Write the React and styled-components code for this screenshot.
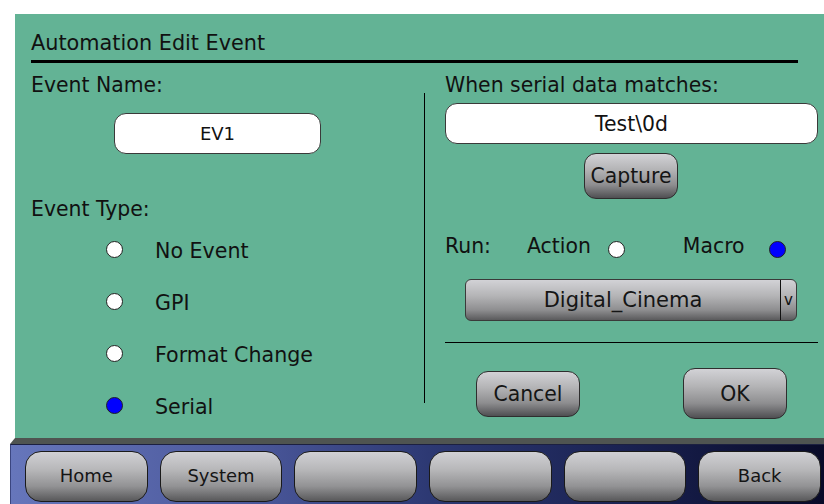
import styled, { createGlobalStyle } from "styled-components";

const GlobalStyle = createGlobalStyle`
  html, body {
    margin: 0;
    padding: 0;
    background: #ffffff;
    font-family: "DejaVu Sans", "Liberation Sans", sans-serif;
    color: #111;
  }
`;

const Page = styled.div`
  width: 824px;
  height: 504px;
  display: flex;
  flex-direction: column;
  overflow: hidden;
`;

const Panel = styled.div`
  margin: 14px 0 0 15px;
  height: 424px;
  box-sizing: border-box;
  padding: 17px 6px 0 16px;
  background: #63b395;
  display: flex;
  flex-direction: column;
`;

const Title = styled.div`
  font-size: 20.8px;
  line-height: 24px;
`;

const TitleRule = styled.div`
  margin-top: 5px;
  width: 767px;
  height: 3px;
  background: #000;
`;

const Columns = styled.div`
  display: grid;
  grid-template-columns: 393px 1px 1fr;
`;

const Column = styled.div`
  display: flex;
  flex-direction: column;
  padding-top: 10px;
  padding-left: ${(p) => p.$inset || 0}px;
`;

const Divider = styled.div`
  margin-top: 30px;
  height: 310px;
  background: #000;
`;

const Label = styled.div`
  font-size: 20.4px;
  line-height: 24px;
  margin-top: ${(p) => p.$top || 0}px;
  white-space: nowrap;
`;

const Field = styled.div`
  box-sizing: border-box;
  height: 41px;
  width: ${(p) => (p.$width ? `${p.$width}px` : "auto")};
  margin: ${(p) => p.$margin};
  background: #fff;
  border: 1px solid #3a3a3a;
  border-radius: 12px;
  display: flex;
  align-items: center;
  justify-content: center;
  font-size: ${(p) => p.$size}px;
`;

const RadioList = styled.div`
  margin-top: 18px;
  padding-left: 75px;
  display: flex;
  flex-direction: column;
  gap: 28px;
`;

const RadioRow = styled.div`
  display: flex;
  align-items: center;
  height: 24px;
  gap: 32px;
  font-size: 20.6px;
`;

const Dot = styled.span`
  box-sizing: border-box;
  width: 17px;
  height: 17px;
  border-radius: 50%;
  border: 1px solid #222;
  background: ${(p) => (p.$on ? "#0000ff" : "#ffffff")};
  margin-bottom: ${(p) => p.$lift || 0}px;
  margin-top: ${(p) => p.$drop || 0}px;
  margin-left: ${(p) => p.$left || 0}px;
  flex-shrink: 0;
`;

const GreyButton = styled.div`
  box-sizing: border-box;
  width: ${(p) => p.$w}px;
  height: ${(p) => p.$h}px;
  margin-left: ${(p) => p.$left || 0}px;
  border: 1px solid #2e2e2e;
  border-radius: 12px;
  background: linear-gradient(#d2d2d6 0%, #b4b4b6 35%, #8e8e90 70%, #4f4f52 100%);
  display: flex;
  align-items: center;
  justify-content: center;
  font-size: 20.4px;
  color: #151515;
`;

const CaptureButton = styled(GreyButton)`
  margin-top: 9px;
  align-self: center;
  margin-left: -1px;
`;

const RunRow = styled.div`
  margin-top: 35px;
  height: 24px;
  display: flex;
  align-items: center;
  font-size: 20.4px;
`;

const RunText = styled.span`
  margin-left: ${(p) => p.$left || 0}px;
  line-height: 24px;
`;

const Select = styled.div`
  box-sizing: border-box;
  margin: 21px 0 0 20px;
  width: 332px;
  height: 42px;
  border: 1px solid #3a3a3a;
  border-radius: 6px;
  background: linear-gradient(#d2d2d6 0%, #b4b4b6 40%, #8e8e90 75%, #5a5a5c 100%);
  display: flex;
`;

const SelectValue = styled.div`
  flex: 1;
  display: flex;
  align-items: center;
  justify-content: center;
  font-size: 21px;
  color: #151515;
`;

const SelectArrow = styled.div`
  width: 15px;
  border-left: 1px solid #111;
  display: flex;
  align-items: center;
  justify-content: center;
  font-size: 15px;
  color: #111;
`;

const HRule = styled.div`
  margin-top: 21px;
  height: 1px;
  background: #000;
`;

const ButtonRow = styled.div`
  margin-top: 25px;
  display: flex;
  align-items: center;
`;

const Shelf = styled.div`
  margin-left: 10px;
  height: 6px;
  background: #4f5451;
  clip-path: polygon(5px 0, 100% 0, 100% 100%, 0 100%);
`;

const NavBar = styled.div`
  margin-left: 10px;
  flex: 1;
  box-sizing: border-box;
  padding: 6px 3px 2px 14px;
  border-left: 1px solid #3b4680;
  border-top: 1px solid #1c2040;
  background: linear-gradient(to right, #6676bb 0%, #4a579a 30%, #2c3872 52%, #1a2252 75%, #080a28 100%);
  display: flex;
  gap: 12px;
`;

const NavButton = styled.div`
  flex: 1;
  box-sizing: border-box;
  border: 1px solid #1a1a1a;
  border-radius: 16px;
  background: linear-gradient(#d0d0d4 0%, #b8b8ba 35%, #929294 70%, #58585a 100%);
  display: flex;
  align-items: center;
  justify-content: center;
  padding-bottom: 3px;
  font-size: 18px;
  color: #151515;
`;

const eventTypes = [
  { label: "No Event", on: false },
  { label: "GPI", on: false },
  { label: "Format Change", on: false },
  { label: "Serial", on: true },
];

const navItems = ["Home", "System", "", "", "", "Back"];

const App = () => {
  return (
    <Page>
      <GlobalStyle />
      <Panel>
        <Title>Automation Edit Event</Title>
        <TitleRule />
        <Columns>
          <Column>
            <Label>Event Name:</Label>
            <Field $width={207} $margin="16px 0 0 83px" $size={18}>
              EV1
            </Field>
            <Label $top={43}>Event Type:</Label>
            <RadioList>
              {eventTypes.map((t) => (
                <RadioRow key={t.label}>
                  <Dot $on={t.on} $lift={4} />
                  <span>{t.label}</span>
                </RadioRow>
              ))}
            </RadioList>
          </Column>
          <Divider />
          <Column $inset={20}>
            <Label>When serial data matches:</Label>
            <Field $margin="6px 0 0 0" $size={20.4}>
              Test\0d
            </Field>
            <CaptureButton $w={94} $h={46}>
              Capture
            </CaptureButton>
            <RunRow>
              <RunText>Run:</RunText>
              <RunText $left={36}>Action</RunText>
              <Dot $left={17} $drop={6} />
              <RunText $left={58}>Macro</RunText>
              <Dot $left={24} $drop={6} $on />
            </RunRow>
            <Select>
              <SelectValue>Digital_Cinema</SelectValue>
              <SelectArrow>v</SelectArrow>
            </Select>
            <HRule />
            <ButtonRow>
              <GreyButton $w={104} $h={46} $left={31}>
                Cancel
              </GreyButton>
              <GreyButton $w={104} $h={51} $left={103}>
                OK
              </GreyButton>
            </ButtonRow>
          </Column>
        </Columns>
      </Panel>
      <Shelf />
      <NavBar>
        {navItems.map((n, i) => (
          <NavButton key={i}>{n}</NavButton>
        ))}
      </NavBar>
    </Page>
  );
};

export default App;
